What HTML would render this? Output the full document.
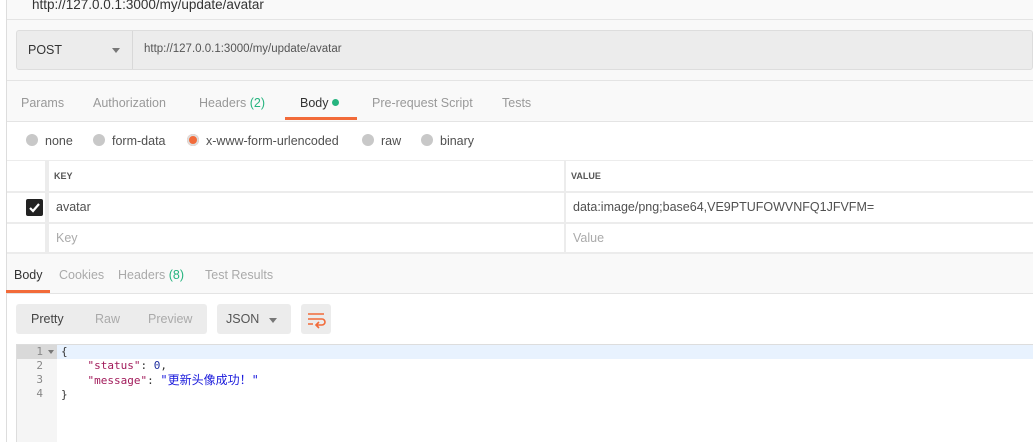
<!DOCTYPE html><html><head><meta charset="utf-8"><style>
*{box-sizing:border-box;margin:0;padding:0}
body{width:1033px;height:442px;overflow:hidden;background:#fff;font-family:"Liberation Sans","Noto Sans CJK SC",sans-serif;font-size:12.5px;color:#505050;position:relative}
.a{position:absolute}
.r{display:inline-block;width:12px;height:12px;border-radius:50%;background:#c8c8c8;vertical-align:-1px;margin-right:7px}
</style></head><body>
<div class="a" style="left:6px;top:0;width:1px;height:442px;background:#ddd"></div>
<div class="a" style="left:7px;top:0;right:0;height:122px;background:#f9f9f9"></div>
<div class="a" style="left:32px;top:-3px;font-size:13.5px;color:#333">http://127.0.0.1:3000/my/update/avatar</div>
<div class="a" style="left:7px;top:19px;right:0;height:1px;background:#e4e4e4"></div>
<div class="a" style="left:16px;top:30px;right:0;height:40px;background:#ececec;border:1px solid #ddd;border-radius:3px"></div>
<div class="a" style="left:132px;top:31px;width:1px;height:38px;background:#d8d8d8"></div>
<div class="a" style="left:28px;top:43px;color:#333">POST</div>
<div class="a" style="left:112px;top:48px;border:4px solid transparent;border-top:5px solid #777"></div>
<div class="a" style="left:144px;top:43px;font-size:11.5px;color:#555">http://127.0.0.1:3000/my/update/avatar</div>
<div class="a" style="left:7px;top:80px;right:0;height:1px;background:#e4e4e4"></div>
<div class="a" style="left:21px;top:96px;color:#999">Params</div>
<div class="a" style="left:93px;top:96px;color:#999">Authorization</div>
<div class="a" style="left:199px;top:96px;color:#999">Headers <span style="color:#26b47f">(2)</span></div>
<div class="a" style="left:300px;top:96px;color:#333">Body <span style="display:inline-block;width:7px;height:7px;border-radius:50%;background:#26b47f;vertical-align:1px"></span></div>
<div class="a" style="left:285px;top:117px;width:72px;height:3px;background:#f26b3a"></div>
<div class="a" style="left:372px;top:96px;color:#999">Pre-request Script</div>
<div class="a" style="left:502px;top:96px;color:#999">Tests</div>
<div class="a" style="left:7px;top:121px;right:0;height:1px;background:#e4e4e4"></div>
<div class="a" style="left:26px;top:134px"><span class="r"></span>none</div>
<div class="a" style="left:93px;top:134px"><span class="r"></span>form-data</div>
<div class="a" style="left:187px;top:134px"><span class="r" style="background:#f26b3a;box-shadow:inset 0 0 0 2px #ddd"></span>x-www-form-urlencoded</div>
<div class="a" style="left:362px;top:134px"><span class="r"></span>raw</div>
<div class="a" style="left:421px;top:134px"><span class="r"></span>binary</div>
<div class="a" style="left:7px;top:160px;right:0;height:94px;background:#ececec"></div>
<div class="a" style="left:7px;top:161px;width:38px;height:30px;background:#fff"></div>
<div class="a" style="left:49px;top:161px;width:515px;height:30px;background:#fff"></div>
<div class="a" style="left:566px;top:161px;right:0;height:30px;background:#fff"></div>
<div class="a" style="left:7px;top:193px;width:38px;height:29px;background:#fff"></div>
<div class="a" style="left:49px;top:193px;width:515px;height:29px;background:#fff"></div>
<div class="a" style="left:566px;top:193px;right:0;height:29px;background:#fff"></div>
<div class="a" style="left:7px;top:224px;width:38px;height:28px;background:#fff"></div>
<div class="a" style="left:49px;top:224px;width:515px;height:28px;background:#fff"></div>
<div class="a" style="left:566px;top:224px;right:0;height:28px;background:#fff"></div>
<div class="a" style="left:54px;top:171px;font-size:9px;font-weight:bold;color:#555">KEY</div>
<div class="a" style="left:571px;top:171px;font-size:9px;font-weight:bold;color:#555">VALUE</div>
<div class="a" style="left:26px;top:199px;width:17px;height:17px;background:#222;border-radius:2px"><svg width="17" height="17"><path d="M4 9l3 3 6-7" stroke="#fff" stroke-width="2.2" fill="none"/></svg></div>
<div class="a" style="left:56px;top:200px">avatar</div>
<div class="a" style="left:573px;top:200px">data:image/png;base64,VE9PTUFOWVNFQ1JFVFM=</div>
<div class="a" style="left:56px;top:231px;color:#aaa">Key</div>
<div class="a" style="left:573px;top:231px;color:#aaa">Value</div>
<div class="a" style="left:7px;top:254px;right:0;height:40px;background:#f9f9f9"></div>
<div class="a" style="left:14px;top:268px;color:#333">Body</div>
<div class="a" style="left:59px;top:268px;color:#aaa">Cookies</div>
<div class="a" style="left:118px;top:268px;color:#aaa">Headers <span style="color:#26b47f">(8)</span></div>
<div class="a" style="left:205px;top:268px;color:#aaa">Test Results</div>
<div class="a" style="left:6px;top:290px;width:44px;height:3px;background:#f26b3a"></div>
<div class="a" style="left:7px;top:293px;right:0;height:1px;background:#e4e4e4"></div>
<div class="a" style="left:16px;top:304px;width:191px;height:30px;background:#ececec;border-radius:3px"></div>
<div class="a" style="left:31px;top:312px;color:#444">Pretty</div>
<div class="a" style="left:95px;top:312px;color:#aaa">Raw</div>
<div class="a" style="left:148px;top:312px;color:#aaa">Preview</div>
<div class="a" style="left:217px;top:304px;width:74px;height:30px;background:#ececec;border-radius:3px"></div>
<div class="a" style="left:226px;top:312px;color:#555">JSON</div>
<div class="a" style="left:269px;top:318px;border:4px solid transparent;border-top:5px solid #777"></div>
<div class="a" style="left:301px;top:304px;width:30px;height:30px;background:#ececec;border-radius:3px"><svg width="30" height="30"><path d="M7 10h16M7 15h14a3 3 0 0 1 0 6h-5M18 18l-3 3 3 3M7 20h5" stroke="#f26b3a" stroke-width="1.6" fill="none"/></svg></div>
<div class="a" style="left:16px;top:344px;right:0;height:98px;border-top:1px solid #ddd;border-left:1px solid #ddd"></div>
<div class="a" style="left:17px;top:345px;width:40px;height:97px;background:#f5f5f5"></div>
<div class="a" style="left:17px;top:345px;width:40px;height:14px;background:#d9d9d9"></div>
<div class="a" style="left:57px;top:345px;right:0;height:14px;background:#e8f2fe"></div>
<div class="a" style="left:0;top:345px;width:57px;font-family:'DejaVu Sans Mono',monospace;font-size:11px;line-height:14px;color:#888;text-align:right;padding-right:14px">1<br>2<br>3<br>4</div>
<div class="a" style="left:48px;top:350px;border:3px solid transparent;border-top:4px solid #777"></div>
<div class="a" style="left:61px;top:345px;font-family:'DejaVu Sans Mono','Noto Sans CJK SC',monospace;font-size:11px;line-height:14px;color:#333;white-space:pre">{
    <span style="color:#a11a5a">"status"</span>: <span style="color:#1f2fa0">0</span>,
    <span style="color:#a11a5a">"message"</span>: <span style="color:#1a1adc;font-size:12px">"更新头像成功！"</span>
}</div>
</body></html>
